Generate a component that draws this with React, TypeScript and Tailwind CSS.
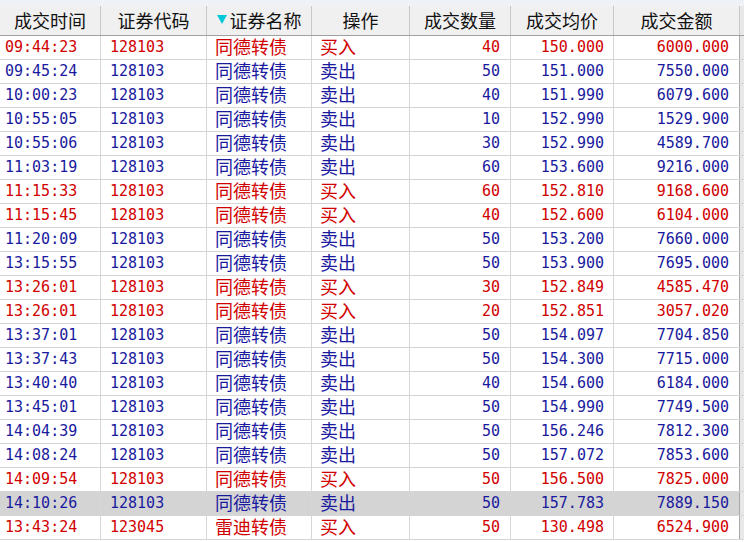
const rows: [string, string, string, string, number, string, string][] = [
  ["09:44:23", "128103", "同德转债", "买入", 40, "150.000", "6000.000"],
  ["09:45:24", "128103", "同德转债", "卖出", 50, "151.000", "7550.000"],
  ["10:00:23", "128103", "同德转债", "卖出", 40, "151.990", "6079.600"],
  ["10:55:05", "128103", "同德转债", "卖出", 10, "152.990", "1529.900"],
  ["10:55:06", "128103", "同德转债", "卖出", 30, "152.990", "4589.700"],
  ["11:03:19", "128103", "同德转债", "卖出", 60, "153.600", "9216.000"],
  ["11:15:33", "128103", "同德转债", "买入", 60, "152.810", "9168.600"],
  ["11:15:45", "128103", "同德转债", "买入", 40, "152.600", "6104.000"],
  ["11:20:09", "128103", "同德转债", "卖出", 50, "153.200", "7660.000"],
  ["13:15:55", "128103", "同德转债", "卖出", 50, "153.900", "7695.000"],
  ["13:26:01", "128103", "同德转债", "买入", 30, "152.849", "4585.470"],
  ["13:26:01", "128103", "同德转债", "买入", 20, "152.851", "3057.020"],
  ["13:37:01", "128103", "同德转债", "卖出", 50, "154.097", "7704.850"],
  ["13:37:43", "128103", "同德转债", "卖出", 50, "154.300", "7715.000"],
  ["13:40:40", "128103", "同德转债", "卖出", 40, "154.600", "6184.000"],
  ["13:45:01", "128103", "同德转债", "卖出", 50, "154.990", "7749.500"],
  ["14:04:39", "128103", "同德转债", "卖出", 50, "156.246", "7812.300"],
  ["14:08:24", "128103", "同德转债", "卖出", 50, "157.072", "7853.600"],
  ["14:09:54", "128103", "同德转债", "买入", 50, "156.500", "7825.000"],
  ["14:10:26", "128103", "同德转债", "卖出", 50, "157.783", "7889.150"],
  ["13:43:24", "123045", "雷迪转债", "买入", 50, "130.498", "6524.900"],
];

const cjk = "font-['Noto_Sans_CJK_SC',sans-serif]";
const mono = "font-['DejaVu_Sans_Mono','Liberation_Mono',monospace]";

const headers = ["成交时间", "证券代码", "证券名称", "操作", "成交数量", "成交均价", "成交金额"];
const widths = ["w-[101px]", "w-[106px]", "w-[105px]", "w-[98px]", "w-[101px]", "w-[103px]", "w-[126px]"];

export default function App() {
  return (
    <div className="w-[744px] h-[542px] overflow-hidden bg-white flex flex-col">
      <div className="h-[6px] bg-[#eef2f6] shrink-0" />
      <div className="flex shrink-0 h-[30px] bg-[#f0f0f0] border-b border-[#a0a0a0]">
        {headers.map((h, i) => (
          <div
            key={h}
            className={`${widths[i]} shrink-0 flex items-center justify-center pb-[2px] border-r border-[#c8c8c8] text-[18px] leading-none text-[#111] ${cjk}`}
          >
            {i === 2 && (
              <svg width="10" height="9" viewBox="0 0 10 9" className="mr-[3px]">
                <path d="M0 0 H10 L5 9 Z" fill="#00c8d8" />
              </svg>
            )}
            {h}
          </div>
        ))}
        <div className="w-[4px] bg-[#e8e8e8]" />
      </div>
      {rows.map((r, idx) => {
        const buy = r[3] === "买入";
        const color = buy ? "text-[#d10000]" : "text-[#1a1a9e]";
        const sel = idx === 19;
        return (
          <div
            key={idx}
            className={`flex shrink-0 h-[24px] border-b border-[#d6d6d6] ${sel ? "bg-[#d4d4d4]" : "bg-white"} ${color}`}
          >
            <div className={`${widths[0]} shrink-0 flex items-center pl-[5px] border-r border-[#d6d6d6] text-[15px] ${mono}`}>
              {r[0]}
            </div>
            <div className={`${widths[1]} shrink-0 flex items-center pl-[9px] border-r border-[#d6d6d6] text-[15px] ${mono}`}>
              {r[1]}
            </div>
            <div className={`${widths[2]} shrink-0 flex items-center pl-[8px] pb-[3px] border-r border-[#d6d6d6] text-[18px] leading-none ${cjk}`}>
              {r[2]}
            </div>
            <div className={`${widths[3]} shrink-0 flex items-center pl-[8px] pb-[3px] border-r border-[#d6d6d6] text-[18px] leading-none ${cjk}`}>
              {r[3]}
            </div>
            <div className={`${widths[4]} shrink-0 flex items-center justify-end pr-[10px] border-r border-[#d6d6d6] text-[15px] ${mono}`}>
              {r[4]}
            </div>
            <div className={`${widths[5]} shrink-0 flex items-center justify-end pr-[9px] border-r border-[#d6d6d6] text-[15px] ${mono}`}>
              {r[5]}
            </div>
            <div className={`${widths[6]} shrink-0 flex items-center justify-end pr-[10px] border-r border-[#a8a8a8] text-[15px] ${mono}`}>
              {r[6]}
            </div>
            <div className="w-[4px] bg-[#e8e8e8]" />
          </div>
        );
      })}
    </div>
  );
}
